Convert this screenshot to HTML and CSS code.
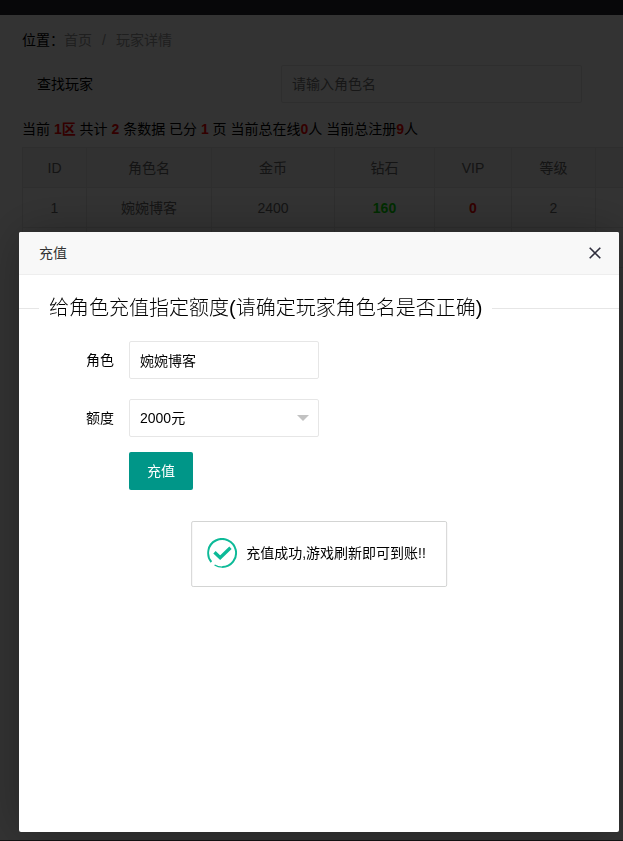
FILE: index.html
```html
<!DOCTYPE html>
<html lang="zh-CN">
<head>
<meta charset="utf-8">
<meta name="viewport" content="width=device-width, initial-scale=1">
<title>玩家详情</title>
<link rel="stylesheet" href="styles.css">
</head>
<body>
<div class="page">
  <header class="topbar"></header>
  <main class="content">
    <nav class="breadcrumb">
      <span>位置：</span><a href="#">首页</a><span class="sep">/</span><a href="#">玩家详情</a>
    </nav>
    <form class="search">
      <label for="player">查找玩家</label>
      <input class="field" id="player" type="text" placeholder="请输入角色名">
    </form>
    <p class="summary">当前 <b>1区</b> 共计 <b>2</b> 条数据 已分 <b>1</b> 页 当前总在线<b>0</b>人 当前总注册<b>9</b>人</p>
    <div class="table-wrap">
      <table class="players">
        <colgroup>
          <col class="c-id"><col class="c-name"><col class="c-gold"><col class="c-gem"><col class="c-vip"><col class="c-level"><col>
        </colgroup>
        <thead>
          <tr><th>ID</th><th>角色名</th><th>金币</th><th>钻石</th><th>VIP</th><th>等级</th><th></th></tr>
        </thead>
        <tbody>
          <tr><td>1</td><td>婉婉博客</td><td>2400</td><td><b class="green">160</b></td><td><b class="red">0</b></td><td>2</td><td></td></tr>
          <tr><td></td><td></td><td></td><td></td><td></td><td></td><td></td></tr>
        </tbody>
      </table>
    </div>
  </main>
</div>

<div class="overlay">
  <section class="dialog" role="dialog" aria-labelledby="dialog-title">
    <header class="dialog-head">
      <h2 id="dialog-title">充值</h2>
      <button class="close" type="button" aria-label="关闭">
        <svg viewBox="0 0 12 12" width="12" height="12"><path d="M0.7 0.7L11.3 11.3M11.3 0.7L0.7 11.3" fill="none" stroke="#2e2d3c" stroke-width="1.6"/></svg>
      </button>
    </header>
    <form class="recharge">
      <h3 class="legend"><span>给角色充值指定额度(请确定玩家角色名是否正确)</span></h3>
      <div class="row">
        <label for="role">角色</label>
        <input class="field" id="role" type="text" value="婉婉博客">
      </div>
      <div class="row">
        <label for="amount">额度</label>
        <div class="select">
          <select class="field" id="amount"><option>2000元</option></select>
          <svg class="arrow" viewBox="0 0 12 6" width="12" height="6"><path d="M0 0H12L6 6Z" fill="#c2c2c2"/></svg>
        </div>
      </div>
      <button class="submit" type="button">充值</button>
    </form>
    <div class="toast" role="status">
      <svg viewBox="0 0 30 30" width="30" height="30" fill="none" stroke="#0dba98">
        <path d="M4.2 24A14 14 0 1 1 15 29" stroke-width="2"/>
        <path d="M15.5 29.2A14.2 14.2 0 0 1 7.4 27" stroke-width="1.3"/>
        <path d="M7.3 14.3L13 19.7L23.3 9.7" stroke-width="3.4"/>
      </svg>
      <span>充值成功,游戏刷新即可到账!!</span>
    </div>
  </section>
</div>
</body>
</html>
```
FILE: styles.css
```css
* { box-sizing: border-box; }

body {
  margin: 0;
  overflow: hidden;
  background: #fff;
  color: #000;
  font: 14px/24px "Liberation Sans", "Noto Sans CJK SC", sans-serif;
}

input, select, button { font: inherit; color: inherit; }

h2, h3, p { margin: 0; font-weight: 400; }

.page {
  min-height: 100vh;
  border-bottom: 1px solid #666;
}

.topbar { height: 15px; background: #23262e; }

.content { padding: 13px 0 0 22px; }

.breadcrumb a { color: #999; text-decoration: none; }
.breadcrumb .sep { margin: 0 10px; color: #999; }

.search {
  display: grid;
  grid-template-columns: 244px minmax(0, 301px);
  align-items: center;
  padding: 13px 15px;
}

.field {
  width: 100%;
  height: 38px;
  padding: 0 10px;
  border: 1px solid #e6e6e6;
  border-radius: 2px;
  background: #fff;
  outline: 0;
}
.field::placeholder { color: #757575; opacity: 1; }

.summary { white-space: nowrap; padding: 1px 0 6px; }
.summary b, .red { color: #f00; }
.green { color: #00e000; }

.table-wrap { overflow: hidden; }

.players {
  width: 800px;
  table-layout: fixed;
  border-collapse: collapse;
  color: #666;
  text-align: center;
}
.players th, .players td {
  height: 40px;
  padding: 0;
  border: 1px solid #e6e6e6;
  font-weight: 400;
}
.players th { background: #f2f2f2; }
.c-id { width: 64px; }
.c-name { width: 125px; }
.c-gold { width: 123px; }
.c-gem { width: 100px; }
.c-vip { width: 77px; }
.c-level { width: 84px; }

.overlay {
  position: fixed;
  inset: 0;
  display: flex;
  padding: 232px 4px 9px 19px;
  background: rgba(0, 0, 0, 0.8);
}

.dialog {
  position: relative;
  flex: 1;
  min-width: 0;
  border-radius: 2px;
  background: #fff;
  box-shadow: 1px 1px 50px rgba(0, 0, 0, 0.3);
}

.dialog-head {
  display: flex;
  align-items: center;
  justify-content: space-between;
  height: 43px;
  padding: 0 18px 0 20px;
  border-bottom: 1px solid #eee;
  border-radius: 2px 2px 0 0;
  background: #f8f8f8;
}
.dialog-head h2 { font-size: 14px; color: #333; }

.close {
  display: flex;
  padding: 0;
  border: 0;
  background: none;
  cursor: pointer;
}

.legend {
  display: flex;
  align-items: center;
  gap: 10px;
  margin: 18px 0;
  font-size: 20px;
  line-height: 30px;
  font-weight: 300;
  white-space: nowrap;
}
.legend::before, .legend::after {
  content: "";
  height: 1px;
  background: #e6e6e6;
}
.legend::before { width: 20px; }
.legend::after { flex: 1; }

.row {
  display: grid;
  grid-template-columns: 95px 190px;
  align-items: center;
  gap: 15px;
  margin-bottom: 20px;
}
.row label { text-align: right; }

.select { position: relative; }
.select select { appearance: none; cursor: pointer; }
.arrow {
  position: absolute;
  top: 16px;
  right: 10px;
  pointer-events: none;
}

.submit {
  display: block;
  height: 38px;
  margin: -5px 0 0 110px;
  padding: 0 18px;
  border: 0;
  border-radius: 2px;
  background: #009688;
  color: #fff;
  cursor: pointer;
}

.toast {
  position: absolute;
  top: 289px;
  left: 50%;
  display: flex;
  align-items: center;
  gap: 9px;
  padding: 16px 20px 18px 15px;
  border: 1px solid #d3d4d3;
  border-radius: 2px;
  background: #fff;
  white-space: nowrap;
  transform: translateX(-50%);
}
.toast svg { display: block; }
```
